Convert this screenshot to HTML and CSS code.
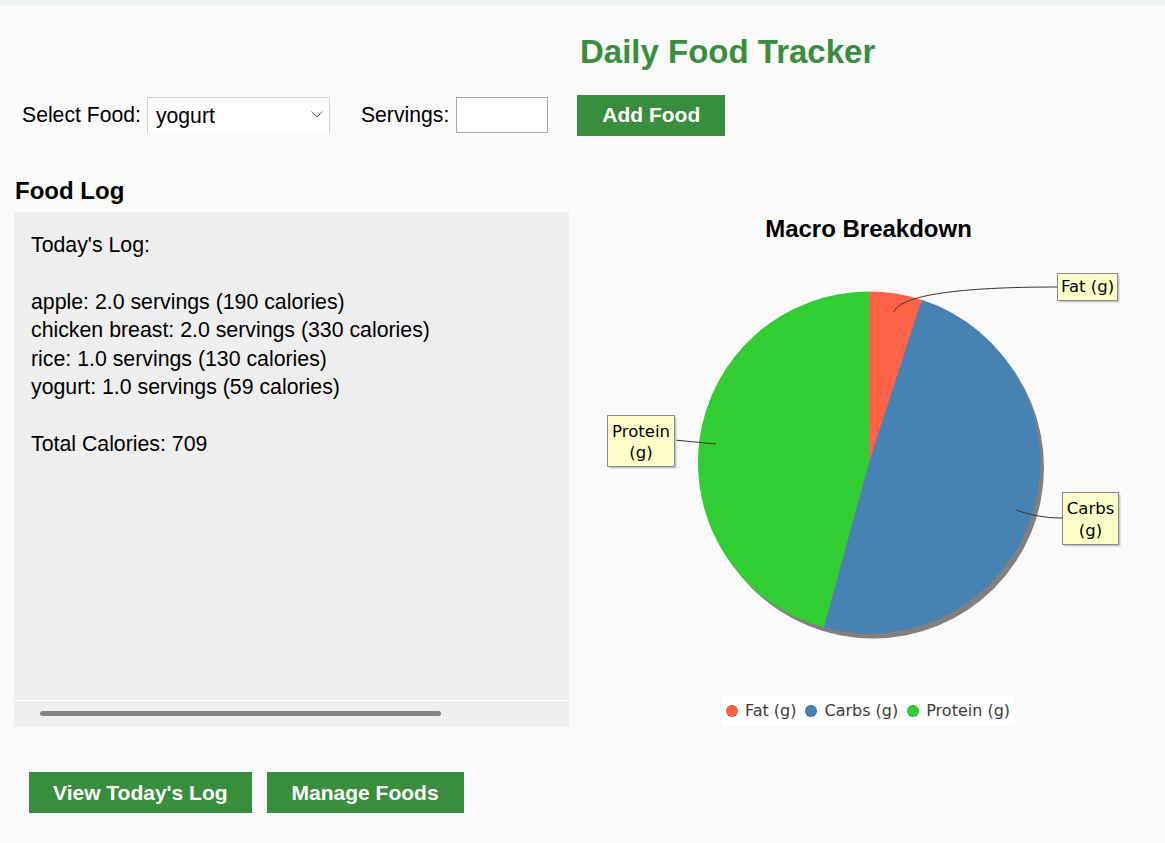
FILE: index.html
```html
<!DOCTYPE html>
<html lang="en">
<head>
<meta charset="utf-8">
<title>Daily Food Tracker</title>
<link rel="stylesheet" href="styles.css">
</head>
<body>
<div class="topbar"></div>
<main class="app">
  <h1 class="title">Daily Food Tracker</h1>

  <div class="controls">
    <label class="ctl-label">Select Food:</label>
    <div class="combo">
      <span class="combo-value">yogurt</span>
      <svg class="chevron" width="12" height="7" viewBox="0 0 12 7"><polyline points="0.5,0.5 6,6 11.5,0.5" fill="none" stroke="#6b6b6b" stroke-width="1"/></svg>
    </div>
    <label class="ctl-label ctl-label-gap">Servings:</label>
    <input class="servings" type="text" value="">
    <button class="btn btn-add">Add Food</button>
  </div>

  <div class="content">
    <section class="log-col">
      <h2 class="log-heading">Food Log</h2>
      <div class="log-box">
        <pre class="log-text">Today's Log:

apple: 2.0 servings (190 calories)
chicken breast: 2.0 servings (330 calories)
rice: 1.0 servings (130 calories)
yogurt: 1.0 servings (59 calories)

Total Calories: 709</pre>
        <div class="hscroll"><div class="thumb"></div></div>
      </div>
      <div class="actions">
        <button class="btn btn-log">View Today's Log</button>
        <button class="btn">Manage Foods</button>
      </div>
    </section>

    <section class="chart-col">
      <h3 class="chart-title">Macro Breakdown</h3>
      <svg class="pie" width="583" height="430" viewBox="0 0 583 430">
        <circle cx="296" cy="217.5" r="171" fill="#808080"/>
        <path d="M292,212.5 L292,41.5 A171,171 0 0 1 344.84,49.87 Z" fill="#ff6347"/>
        <path d="M292,212.5 L344.84,49.87 A171,171 0 0 1 246.87,377.45 Z" fill="#4682b4"/>
        <path d="M292,212.5 L246.87,377.45 A171,171 0 0 1 292,41.5 Z" fill="#32cd32"/>

        <path d="M480,37 C383,37 323,45 317,62" fill="none" stroke="#333" stroke-width="1"/>
        <path d="M97,190 L139,194" fill="none" stroke="#333" stroke-width="1"/>
        <path d="M485,268 C468,268 453,265 439,260" fill="none" stroke="#333" stroke-width="1"/>

        <rect x="482.5" y="25.5" width="60" height="27" fill="#c8c8c8"/>
        <rect x="480.5" y="23.5" width="60" height="27" fill="#ffffcc" stroke="#8a8a8a"/>
        <text class="callout" x="510.5" y="42" text-anchor="middle">Fat (g)</text>

        <rect x="32.5" y="167.5" width="67" height="51" fill="#c8c8c8"/>
        <rect x="30.5" y="165.5" width="67" height="51" fill="#ffffcc" stroke="#8a8a8a"/>
        <text class="callout" x="64" y="186.5" text-anchor="middle">Protein</text>
        <text class="callout" x="64" y="208" text-anchor="middle">(g)</text>

        <rect x="487.5" y="244.5" width="56" height="52" fill="#c8c8c8"/>
        <rect x="485.5" y="242.5" width="56" height="52" fill="#ffffcc" stroke="#8a8a8a"/>
        <text class="callout" x="513.5" y="263.5" text-anchor="middle">Carbs</text>
        <text class="callout" x="513.5" y="286" text-anchor="middle">(g)</text>
      </svg>
      <div class="legend">
        <span class="legend-item"><span class="dot dot-fat"></span>Fat (g)</span>
        <span class="legend-item"><span class="dot dot-carbs"></span>Carbs (g)</span>
        <span class="legend-item"><span class="dot dot-protein"></span>Protein (g)</span>
      </div>
    </section>
  </div>
</main>
</body>
</html>
```
FILE: styles.css
```css
html, body {
  margin: 0;
  padding: 0;
  background: #fafafa;
  font-family: "Liberation Sans", Arial, sans-serif;
  color: #000;
}

.topbar {
  height: 5px;
  background: #edf2f5;
}

.app {
  width: 1165px;
}

.title {
  margin: 28px 0 0 580px;
  font-size: 33px;
  line-height: 38px;
  font-weight: bold;
  color: #388e3c;
}

.controls {
  display: flex;
  align-items: center;
  margin-top: 23px;
  padding-left: 22px;
  height: 42px;
}

.ctl-label {
  font-size: 21.2px;
  margin-right: 6px;
}

.ctl-label-gap {
  margin-left: 31px;
  margin-right: 7px;
}

.combo {
  box-sizing: border-box;
  width: 183px;
  height: 36px;
  background: #fff;
  border: 1px solid #cfcfcf;
  border-bottom: none;
  display: flex;
  align-items: center;
  justify-content: space-between;
  padding: 0 6px 0 8px;
}

.combo-value {
  font-size: 21.2px;
}

.chevron {
  display: block;
  margin-top: -2px;
}

.servings {
  box-sizing: border-box;
  width: 92px;
  height: 36px;
  margin: 0;
  border: 1px solid #a9a9a9;
  background: #fff;
  padding: 0 6px;
  font-family: inherit;
  font-size: 21px;
  outline: none;
}

.btn {
  height: 41px;
  padding: 0 25px;
  border: none;
  background: #388e3c;
  color: #fff;
  font-family: "Liberation Sans", Arial, sans-serif;
  font-size: 21px;
  font-weight: bold;
  cursor: pointer;
}

.btn-add {
  margin-left: 29px;
  width: 148px;
  padding: 0;
}

.btn-log {
  padding: 0 24px;
}

.content {
  display: flex;
  align-items: flex-start;
  margin-top: 41px;
  padding-left: 14px;
  gap: 8px;
}

.log-col {
  width: 555px;
}

.log-heading {
  margin: 0 0 7px 1px;
  font-size: 24px;
  line-height: 28px;
  font-weight: bold;
}

.log-box {
  background: #efefef;
}

.log-text {
  box-sizing: border-box;
  height: 489px;
  margin: 0;
  padding: 18.5px 17px 0;
  font-family: "Liberation Sans", Arial, sans-serif;
  font-size: 21.3px;
  line-height: 28.5px;
  white-space: pre;
  overflow: hidden;
  border-bottom: 1px solid #ffffff;
}

.hscroll {
  height: 26px;
  padding: 10px 0 0 26px;
  box-sizing: border-box;
}

.thumb {
  width: 401px;
  height: 5px;
  border-radius: 3px;
  background: #858585;
}

.actions {
  display: flex;
  gap: 15px;
  margin-top: 45px;
  padding-left: 15px;
}

.chart-col {
  width: 583px;
  display: flex;
  flex-direction: column;
  align-items: center;
  padding-top: 38px;
}

.chart-title {
  margin: 0;
  font-size: 24px;
  line-height: 28px;
  font-weight: bold;
  color: #000;
}

.pie {
  display: block;
  margin-top: 7px;
}

.callout {
  font-family: "DejaVu Sans", Verdana, sans-serif;
  font-size: 16.5px;
  fill: #000;
}

.legend {
  margin-top: 16px;
  height: 30px;
  background: #fff;
  display: flex;
  align-items: center;
  padding: 0 5px 0 4px;
  font-family: "DejaVu Sans", Verdana, sans-serif;
  font-size: 16px;
  color: #3c3c3c;
  gap: 9px;
}

.legend-item {
  display: flex;
  align-items: center;
  gap: 7px;
  line-height: 30px;
}

.dot {
  width: 12px;
  height: 12px;
  border-radius: 50%;
  box-sizing: border-box;
  border: 1px solid rgba(0, 0, 0, 0.12);
}

.dot-fat { background: #ff6347; }
.dot-carbs { background: #4682b4; }
.dot-protein { background: #32cd32; }
```
